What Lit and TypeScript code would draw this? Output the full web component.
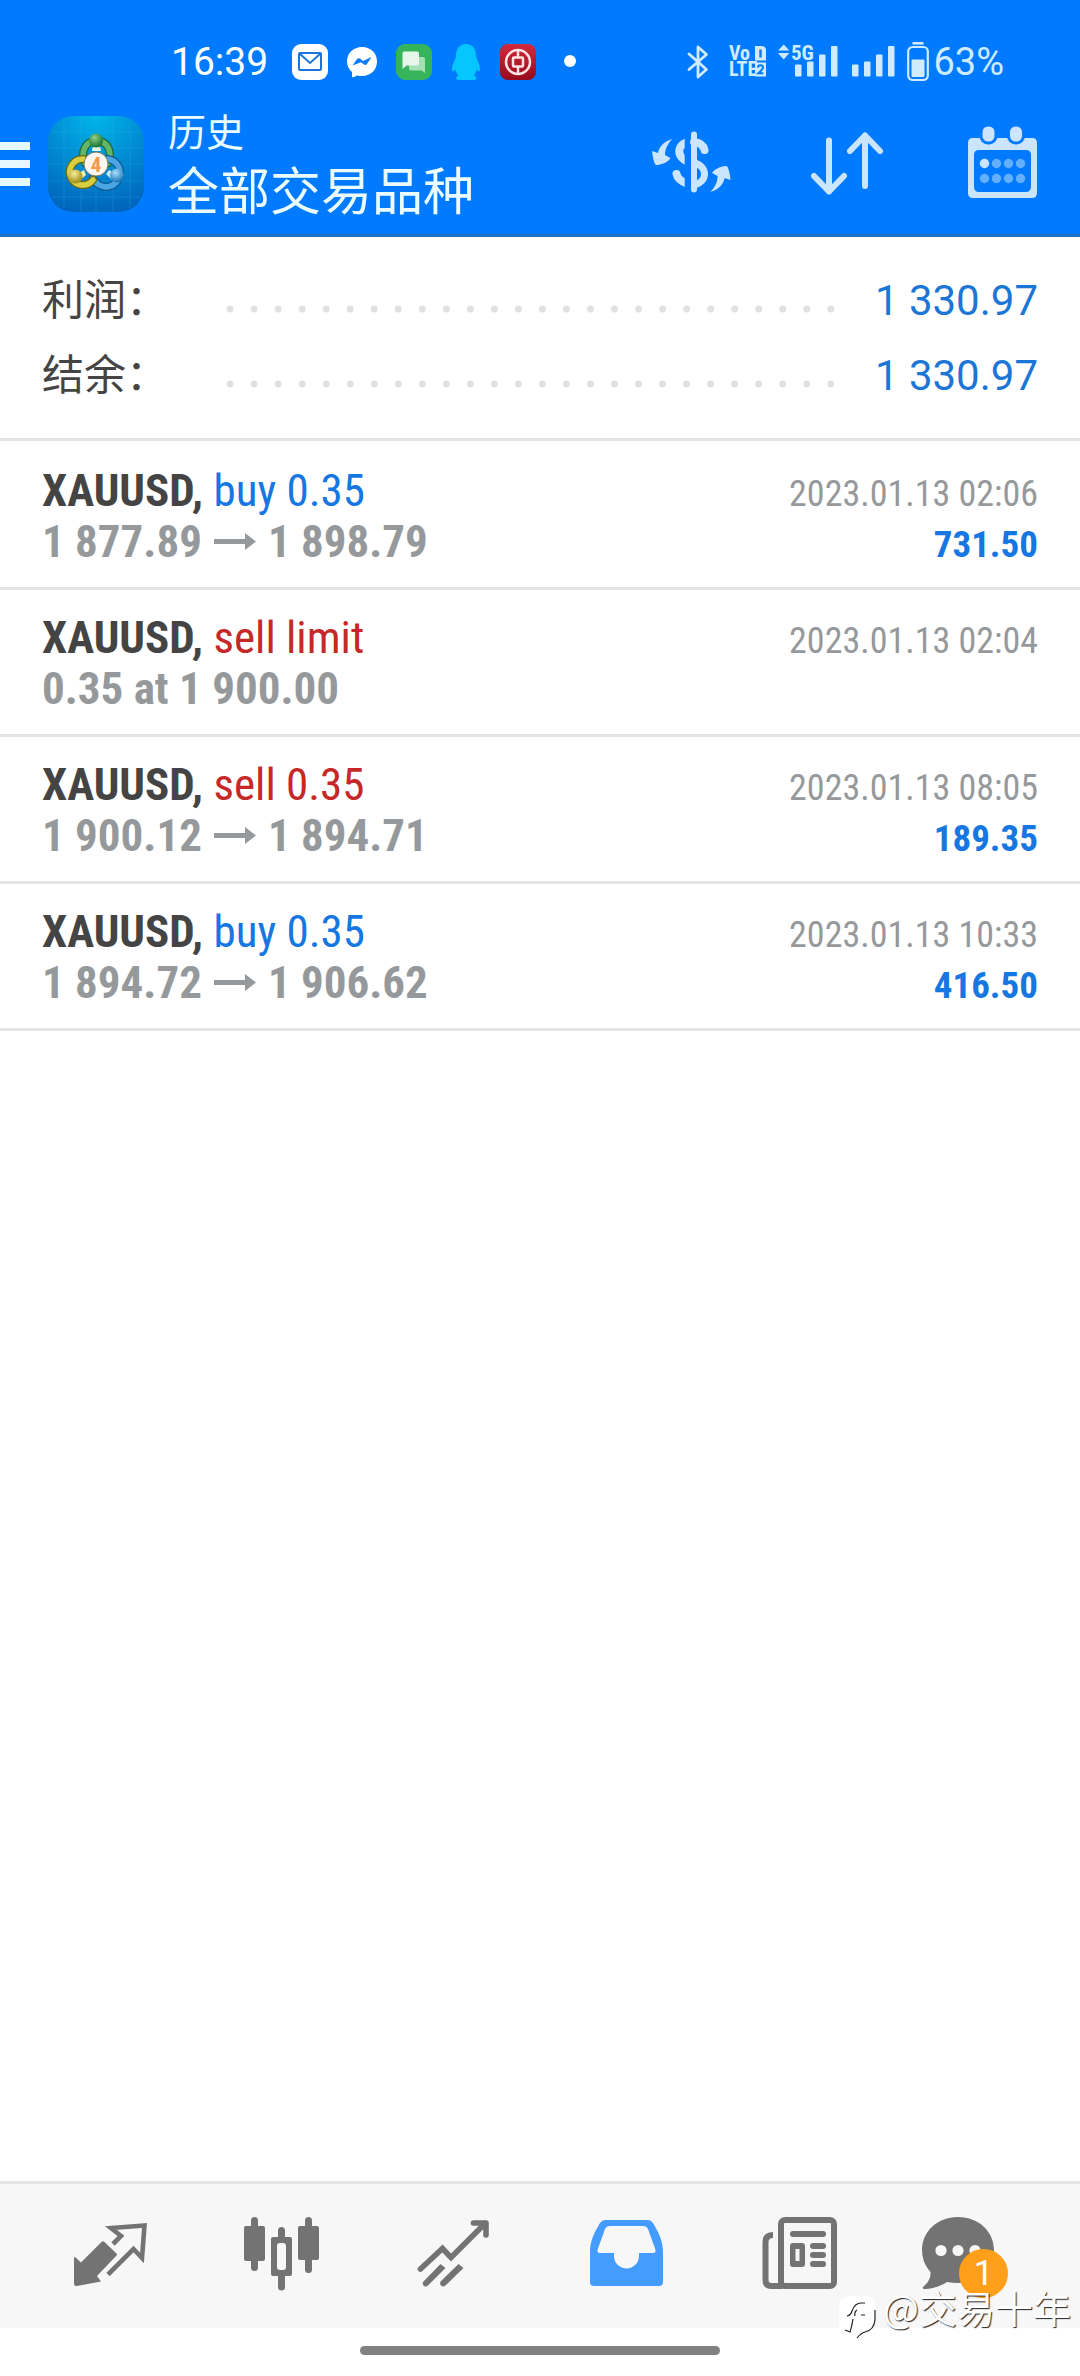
import { LitElement, html, css, svg, nothing, type TemplateResult } from "lit";
import { customElement, property, state } from "lit/decorators.js";
import { classMap } from "lit/directives/class-map.js";

interface Deal {
  symbol: string;
  side: "buy" | "sell";
  action: string;
  from: string;
  to?: string;
  time: string;
  profit?: string;
}

const DEALS: Deal[] = [
  { symbol: "XAUUSD", side: "buy", action: "buy 0.35", from: "1 877.89", to: "1 898.79", time: "2023.01.13 02:06", profit: "731.50" },
  { symbol: "XAUUSD", side: "sell", action: "sell limit", from: "0.35 at 1 900.00", time: "2023.01.13 02:04" },
  { symbol: "XAUUSD", side: "sell", action: "sell 0.35", from: "1 900.12", to: "1 894.71", time: "2023.01.13 08:05", profit: "189.35" },
  { symbol: "XAUUSD", side: "buy", action: "buy 0.35", from: "1 894.72", to: "1 906.62", time: "2023.01.13 10:33", profit: "416.50" },
];

const TOTALS = [
  { label: "利润：", value: "1 330.97" },
  { label: "结余：", value: "1 330.97" },
];

@customElement("status-bar")
export class StatusBar extends LitElement {
  static styles = css`
    :host {
      display: flex;
      align-items: center;
      justify-content: space-between;
      height: 94px;
      padding: 29px 76px 0 171px;
      box-sizing: border-box;
      font-size: 39px;
      line-height: 40px;
      color: #fff;
    }
    svg { display: block; flex: none; overflow: visible; }
    .apps { display: flex; align-items: center; gap: 16px; }
    .time { min-width: 105px; }
    .system { display: flex; align-items: center; color: #cfebff; gap: 12px; }
    .system .level { display: flex; align-items: center; gap: 4px; font-size: 38px; }
    .vo { font: 700 20px "Roboto Condensed", Roboto, sans-serif; }
    .net { font: 700 21px "Roboto Condensed", Roboto, sans-serif; }
  `;

  render() {
    return html`
      <div class="apps">
        <span class="time">16:39</span>
        <svg width="36" height="36" viewBox="0 0 36 36">
          <rect width="36" height="36" rx="9" fill="#fff" />
          <g fill="none" stroke="#1b74dc" stroke-width="2">
            <rect x="7" y="9" width="22" height="17" rx="1" />
            <path d="M8 10 L18 19 L28 10" />
          </g>
        </svg>
        <svg width="36" height="36" viewBox="0 0 36 36">
          <path d="M18 3 C9 3 3 9.400 3 17.500 C3 22 5 25.500 8 28 V32.500 Q8.200 33.600 9.400 33.200 L13 31.500 Q15.500 32 18 32 C27 32 33 25.600 33 17.500 S27 3 18 3Z" fill="#fff" />
          <path d="M8.500 21.500 L13 15 Q14.300 13.500 16 14.600 L19 17 L27.500 13 L23 20 Q21.700 21.700 20 20.500 L17 18.300Z" fill="#0a7cff" />
        </svg>
        <svg width="36" height="36" viewBox="0 0 36 36">
          <rect width="36" height="36" rx="9" fill="#36b45c" />
          <path d="M15 13 H27 Q29 13 29 15 V29 L25.500 26.500 H15 Q13 26.500 13 24.500 V15Z" fill="#a5e0b5" />
          <path d="M8 7.500 H21 Q23 7.500 23 9.500 V19.500 Q23 21.500 21 21.500 H10.500 L6.500 25 V9.500 Q6.500 7.500 8 7.500Z" fill="#e6f7ea" />
        </svg>
        <svg width="36" height="36" viewBox="0 0 36 36">
          <path d="M18 0 C11.500 0 8 5 8 11.500 C8 15 4 20 4 25 Q4 27.500 5 27.500 Q6.300 27 7.300 25.500 Q8.300 29.500 10.500 31.500 Q8 32.500 8 34 Q8 36 13 36 H24 Q28.500 36 28.500 34 Q28.500 32.500 25.700 31.500 Q27.800 29.500 28.800 25.500 Q29.800 27 31 27.500 Q32 27.500 32 25 C32 20 28 15 28 11.500 C28 5 24.500 0 18 0Z" fill="#05c6ff" />
        </svg>
        <svg width="36" height="36" viewBox="0 0 36 36">
          <defs>
            <linearGradient id="bank" x1="0" y1="0" x2="0" y2="1">
              <stop offset="0" stop-color="#d32a3e" />
              <stop offset="1" stop-color="#950a1c" />
            </linearGradient>
          </defs>
          <rect width="36" height="36" rx="8" fill="url(#bank)" />
          <g fill="none" stroke="#ffe3e3" stroke-width="2.500">
            <circle cx="18" cy="18" r="12" />
            <rect x="13" y="13.500" width="10" height="9" rx="1" />
            <path d="M18 6 V13 M18 23 V30" />
          </g>
        </svg>
        <svg width="36" height="36" viewBox="0 0 36 36"><circle cx="18" cy="17" r="6" fill="#fff" /></svg>
      </div>
      <div class="system">
        <svg width="22" height="36" viewBox="0 0 22 36">
          <path d="M2 10 L19.500 25.500 L11 33 V3 L19.500 10.500 L2 25.500" fill="none" stroke="currentColor" stroke-width="2.800" stroke-linejoin="round" stroke-linecap="round" />
        </svg>
        <svg width="44" height="36" viewBox="0 0 44 36">
          <g class="vo" fill="currentColor">
            <text x="8" y="16">Vo</text>
            <text x="8" y="32">LTE</text>
          </g>
          <path d="M34 2 H40 Q45 2 45 6 V16.500 H34Z M34 18.500 H45 V32.500 H34Z" fill="currentColor" />
          <path d="M39.500 5.500 V13.500" stroke="#007aff" stroke-width="2.400" />
          <path d="M37 23.500 Q37 21.300 39.500 21.300 Q42 21.300 42 23.500 Q42 25 37.300 29.300 H42.300" fill="none" stroke="#007aff" stroke-width="2" />
        </svg>
        <svg width="62" height="36" viewBox="0 0 62 36">
          <g fill="currentColor">
            <path d="M1 6.500 L6.700 0.500 L12.400 6.500Z M1 9 L6.700 15.500 L12.400 9Z" />
            <text class="net" x="14" y="16">5G</text>
            <rect x="18" y="20.500" width="6.500" height="12" rx="1" />
            <rect x="30" y="17.500" width="6.500" height="15" rx="1" />
            <rect x="42" y="10.500" width="6.500" height="22" rx="1" />
            <rect x="54" y="2" width="6.500" height="30.500" rx="1" />
          </g>
        </svg>
        <svg width="44" height="36" viewBox="0 0 44 36">
          <g fill="currentColor">
            <rect x="1" y="20.500" width="6.500" height="12" rx="1" />
            <rect x="13" y="17.500" width="6.500" height="15" rx="1" />
            <rect x="25" y="10.500" width="6.500" height="22" rx="1" />
            <rect x="37" y="2" width="6.500" height="30.500" rx="1" />
          </g>
        </svg>
        <span class="level">
          <svg width="22" height="40" viewBox="0 0 22 40">
            <rect x="5.500" y="0" width="11" height="2.600" fill="currentColor" />
            <rect x="1.200" y="5" width="19.600" height="33" rx="4.500" fill="none" stroke="currentColor" stroke-width="2.200" />
            <rect x="4.500" y="17.500" width="13" height="17.500" rx="1" fill="currentColor" />
          </svg>
          63%
        </span>
      </div>
    `;
  }
}

@customElement("history-header")
export class HistoryHeader extends LitElement {
  static styles = css`
    :host {
      display: flex;
      align-items: center;
      height: 143px;
      box-sizing: border-box;
      border-bottom: 3px solid #1d70c4;
      padding-right: 37px;
      color: #fff;
    }
    svg { display: block; }
    button {
      display: block;
      padding: 0;
      border: 0;
      background: none;
      color: #cbe5fe;
      cursor: pointer;
    }
    .brand { margin-left: 18px; flex: none; }
    .titles { flex: 1; min-width: 0; margin-left: 24px; padding-top: 6px; }
    h1, p { margin: 0; font-weight: 400; color: #eafcff; }
    h1 { font-size: 38px; line-height: 52px; }
    p { font-size: 51px; line-height: 68px; }
    .actions { display: flex; gap: 76px; }
    .four { font: 700 21px "Roboto Condensed", Roboto, sans-serif; }
  `;

  render() {
    return html`
      <button aria-label="菜单">
        <svg width="30" height="44" viewBox="0 0 30 44">
          <path d="M0 4 H30 M0 22 H30 M0 40 H30" stroke="#e4faff" stroke-width="8" />
        </svg>
      </button>
      <svg class="brand" width="96" height="96" viewBox="0 0 96 96">
        <defs>
          <radialGradient id="sky" cx="0.5" cy="0" r="1.050">
            <stop offset="0" stop-color="#00b6ea" />
            <stop offset="0.5" stop-color="#008bd2" />
            <stop offset="1" stop-color="#0062bb" />
          </radialGradient>
          <radialGradient id="g" cx="0.4" cy="0.3" r="0.7"><stop offset="0" stop-color="#8fd08a" /><stop offset="1" stop-color="#17702a" /></radialGradient>
          <radialGradient id="y" cx="0.4" cy="0.3" r="0.7"><stop offset="0" stop-color="#f6ee9a" /><stop offset="1" stop-color="#9c8a10" /></radialGradient>
          <radialGradient id="b" cx="0.4" cy="0.3" r="0.7"><stop offset="0" stop-color="#a8e0fb" /><stop offset="1" stop-color="#1672b8" /></radialGradient>
        </defs>
        <rect width="96" height="96" rx="25" fill="url(#sky)" />
        <path d="M16 4 V92 M33 1 V95 M48 0 V96 M65 1 V95 M82 4 V92 M4 16 H92 M1 32 H95 M0 48 H96 M1 65 H95 M4 81 H92" stroke="#39b2e6" stroke-width="1" opacity="0.250" />
        <g stroke-linecap="round" fill="none">
          <path d="M37 47 A13.500 15 0 1 1 60 47" stroke="#1c6b35" stroke-width="8" />
          <path d="M37 47 A13.500 15 0 1 1 60 47" stroke="#62b667" stroke-width="5.500" />
          <path d="M60 43 A14 14 0 1 1 45 62" stroke="#125a93" stroke-width="8" />
          <path d="M60 43 A14 14 0 1 1 45 62" stroke="#4aa5e2" stroke-width="5.500" />
          <path d="M45 64 A13 13 0 1 1 35 43" stroke="#6e6a12" stroke-width="8" />
          <path d="M45 64 A13 13 0 1 1 35 43" stroke="#d8cf40" stroke-width="5.500" />
        </g>
        <path d="M44 35 Q44 30 48 30 Q53 30 53 35Z" fill="#e9f6e6" />
        <path d="M30 66 Q27 58 36 54 L38 59Z" fill="#f3efb4" />
        <path d="M66 66 Q70 58 61 54 L58 58Z" fill="#c5e8fb" />
        <circle cx="48" cy="24.500" r="7" fill="url(#g)" />
        <circle cx="27.500" cy="60.500" r="7" fill="url(#y)" />
        <circle cx="69" cy="59.500" r="7" fill="url(#b)" />
        <circle cx="48" cy="48" r="12" fill="#fbf6f2" stroke="#7d7a60" stroke-width="1" />
        <text class="four" x="48" y="55.500" text-anchor="middle" fill="#f3994a">4</text>
      </svg>
      <div class="titles">
        <h1>历史</h1>
        <p>全部交易品种</p>
      </div>
      <div class="actions">
        <button aria-label="品种">
          <svg width="80" height="80" viewBox="0 0 80 80">
            <defs><clipPath id="left"><rect x="0" y="0" width="33.700" height="80" /></clipPath></defs>
            <g fill="none" stroke="currentColor" stroke-width="8">
              <g clip-path="url(#left)">
                <path d="M38 18 C25 20 25 34 38 38" />
                <path d="M25.500 50 Q27 57 38 60" stroke-linecap="round" />
              </g>
              <path d="M43 10.500 V65.500" stroke-width="6" stroke-linecap="round" />
              <path d="M43 18 Q52 19 53.500 26" stroke-linecap="round" />
              <path d="M43 39 C57 42 57 58 43 61" stroke-width="7" />
            </g>
            <g fill="currentColor">
              <path id="swing" d="M21.500 15 C13 17 8 23 7 29 L1 27 Q2 36 4 40 Q5 41.500 7 41 C12 40 17 38 19.500 34 L14 31 C14 25 17 19 21.500 15Z" />
              <use href="#swing" transform="rotate(180 40.300 41.500)" />
            </g>
          </svg>
        </button>
        <button aria-label="排序">
          <svg width="80" height="80" viewBox="0 0 80 80">
            <path d="M22 16.500 V67.500 M7 52 L22 67.500 L37 52 M58 62 V11.500 M43 27 L58 11.500 L73 27" fill="none" stroke="currentColor" stroke-width="6" stroke-linecap="round" stroke-linejoin="round" />
          </svg>
        </button>
        <button aria-label="日期">
          <svg width="80" height="80" viewBox="0 0 80 80">
            <path fill-rule="evenodd" fill="currentColor" d="M10 14 H69 Q74 14 74 19 V69 Q74 74 69 74 H10 Q5 74 5 69 V19 Q5 14 10 14Z M16 26 Q11 26 11 31 V62 Q11 68 16 68 H63 Q68 68 68 62 V31 Q68 26 63 26Z" />
            <g fill="currentColor" stroke="#007aff" stroke-width="3">
              <rect x="18" y="1" width="15" height="18" rx="7" />
              <rect x="45.500" y="1" width="15" height="18" rx="7" />
            </g>
            ${[39.5, 54.5].map((y) =>
              [21.5, 33.5, 45.5, 57.5].map((x, i) => svg`<circle cx=${x} cy=${y} r="4.700" fill=${i === 0 && y < 50 ? "#cbe5fe" : "#62b0ff"} />`),
            )}
          </svg>
        </button>
      </div>
    `;
  }
}

@customElement("totals-panel")
export class TotalsPanel extends LitElement {
  static styles = css`
    :host {
      display: block;
      padding: 26px 42px 25px;
      border-bottom: 3px solid #e3e3e3;
    }
    dl { margin: 0; }
    .line { display: flex; align-items: center; height: 75px; font-size: 42px; line-height: 50px; }
    dt { min-width: 176px; color: #444; }
    .leader {
      flex: 1;
      height: 24px;
      margin-right: 32px;
      background: radial-gradient(circle, #e0e0e0 3px, transparent 4px) 0 100% / 24px 8px round no-repeat;
    }
    dd { margin: 0; color: #1b76d6; }
  `;

  render() {
    return html`<dl>
      ${TOTALS.map((t) => html`<div class="line"><dt>${t.label}</dt><span class="leader"></span><dd>${t.value}</dd></div>`)}
    </dl>`;
  }
}

@customElement("deal-row")
export class DealRow extends LitElement {
  @property({ attribute: false }) deal!: Deal;

  static styles = css`
    :host {
      display: block;
      padding: 22px 42px 20px;
      border-bottom: 3px solid #e3e3e3;
      font-family: "Roboto Condensed", Roboto, sans-serif;
      font-size: 45px;
      line-height: 51px;
      color: #96999b;
    }
    .line { display: flex; align-items: baseline; justify-content: space-between; height: 51px; }
    .symbol { font-weight: 700; color: #444; }
    .buy { color: #1677e2; }
    .sell { color: #c62828; }
    .prices { display: flex; align-items: baseline; gap: 12px; font-weight: 700; }
    .time { font-size: 36px; }
    .profit { font-size: 37px; font-weight: 700; color: #1677e2; }
  `;

  render() {
    const d = this.deal;
    return html`
      <div class="line">
        <span><span class="symbol">${d.symbol},</span> <span class=${d.side}>${d.action}</span></span>
        <time class="time">${d.time}</time>
      </div>
      <div class="line">
        <span class="prices">
          <span>${d.from}</span>
          ${d.to
            ? html`<svg width="42" height="24" viewBox="0 0 42 24"><path d="M0 6 H31 V0 L42 8.500 L31 17 V11 H0Z" fill="currentColor" /></svg><span>${d.to}</span>`
            : nothing}
        </span>
        ${d.profit ? html`<span class="profit">${d.profit}</span>` : nothing}
      </div>
    `;
  }
}

interface Tab {
  id: string;
  label: string;
  icon: TemplateResult;
  badge?: number;
}

const TABS: Tab[] = [
  {
    id: "quotes",
    label: "行情",
    icon: svg`
      <path d="M7 43.500 L8 43 L14 48.500 L34.500 28 Q36 26.500 37.500 28 L49.500 39.500 Q50.500 40.500 49.500 41.500 L30 62 L34 67.500 L10 72 Q7 72.500 7 69.500Z" fill="currentColor" />
      <path d="M46 30 L54 22 L44 14 L77.500 11.500 L75 44 L66.500 35 L41 60.500" fill="none" stroke="currentColor" stroke-width="4.600" />`,
  },
  {
    id: "chart",
    label: "图表",
    icon: svg`
      <g fill="currentColor">
        <rect x="12" y="3" width="7" height="54" rx="3.500" /><rect x="5" y="12" width="21" height="35" rx="2" />
        <rect x="66" y="3" width="7" height="56" rx="3.500" /><rect x="59" y="12" width="21" height="34" rx="2" />
        <path fill-rule="evenodd" d="M39 23 V16.500 A3.500 3.500 0 0 1 46 16.500 V23 H51 Q53 23 53 25 V60 Q53 62 51 62 H46 V73 A3.500 3.500 0 0 1 39 73 V62 H34 Q32 62 32 60 V25 Q32 23 34 23Z M38 32 V53 Q38 56 41 56 H44 Q47 56 47 53 V32 Q47 29 44 29 H41 Q38 29 38 32Z" />
      </g>`,
  },
  {
    id: "trade",
    label: "交易",
    icon: svg`
      <g fill="none" stroke="currentColor" stroke-width="5.600" stroke-linecap="round">
        <path d="M9.500 55 L31.500 34.500 L40 43.500 L74 9.500" stroke-linejoin="miter" />
        <path d="M62.500 9 H75 V21" stroke-linejoin="round" />
      </g>
      <path d="M12 68 L29.500 50 L34.500 54 L17 71.500 Q14.500 73.500 12.500 71.500 Q11 70 12 68Z M29.500 67.500 L47.500 50 L52.500 54 L34.500 71.500 Q32 73.500 30 71.500 Q28.500 69.500 29.500 67.500Z" fill="currentColor" />`,
  },
  {
    id: "history",
    label: "历史",
    icon: svg`
      <path fill-rule="evenodd" fill="currentColor" d="M22 6 H65 Q68 6 70 9 C76 19 80 27 80 38 V68 Q80 72 76 72 H11 Q7 72 7 68 V38 C7 27 11 19 17 9 Q19 6 22 6Z M27 12 Q23.500 12 22 15 L14.800 35 Q13.500 39 17 39 H31 V42 A12.500 12.500 0 0 0 56 42 V39 H70 Q73.500 39 72.200 35 L65 15 Q63.500 12 60 12Z" />`,
  },
  {
    id: "news",
    label: "新闻",
    icon: svg`
      <g fill="none" stroke="currentColor" stroke-width="6">
        <rect x="26" y="6" width="53" height="66" rx="4" />
        <path d="M18 21 Q10.500 21 10.500 28 V66 Q10.500 72 16.500 72 H28" />
      </g>
      <g fill="currentColor">
        <rect x="35" y="17" width="36" height="6" rx="3" />
        <path fill-rule="evenodd" d="M38 29 H47 Q50 29 50 32 V50 Q50 53 47 53 H38 Q35 53 35 50 V32 Q35 29 38 29Z M40.500 35 V47 H44.500 V35Z" />
        <rect x="55" y="29" width="16" height="6" rx="3" />
        <rect x="55" y="38" width="16" height="6" rx="3" />
        <rect x="55" y="47" width="16" height="6" rx="3" />
      </g>`,
  },
  {
    id: "chat",
    label: "消息",
    badge: 1,
    icon: svg`
      <path d="M31 3 C10 3 -5 18 -5 36 Q-5 49 3.500 58 C4 64 1 69 -4 73 Q-5 75.500 -2 75 C7 74.500 14 72 20 68 Q25 69 31 69 C52 69 67 54 67 36 S52 3 31 3Z" fill="currentColor" />
      <g fill="#f7f7f7"><circle cx="14" cy="36.500" r="5.600" /><circle cx="31" cy="36.500" r="5.600" /><circle cx="48" cy="36.500" r="5.600" /></g>`,
  },
];

@customElement("tab-bar")
export class TabBar extends LitElement {
  @state() private current = "history";

  static styles = css`
    :host { display: block; position: relative; background: #fff; }
    nav {
      display: grid;
      grid-template-columns: repeat(6, 1fr);
      padding: 0 24px;
      border-top: 3px solid #e3e3e3;
      background: #f7f7f7;
    }
    .tab {
      display: flex;
      justify-content: center;
      padding: 30px 0 36px;
      border: 0;
      background: none;
      color: #737373;
      cursor: pointer;
    }
    .active { color: #459cff; }
    .icon { position: relative; display: block; }
    svg { display: block; overflow: visible; }
    .badge {
      position: absolute;
      right: 5px;
      bottom: -6px;
      width: 49px;
      height: 49px;
      border-radius: 50%;
      background: #ff9f1a;
      color: #fff;
      font: 35px/49px Roboto, sans-serif;
      text-align: center;
    }
    .gesture { display: flex; justify-content: center; padding: 18px 0 21px; }
    .pill { width: 33.333%; height: 9px; border-radius: 5px; background: #808080; }
    .signature {
      position: absolute;
      right: 9px;
      bottom: 36px;
      display: flex;
      align-items: flex-end;
      gap: 6px;
      color: #fff;
      font-size: 38px;
      line-height: 50px;
      font-family: "Noto Sans CJK SC", sans-serif;
      text-shadow: 1px 1px 1px #222;
      pointer-events: none;
    }
    .author { padding-bottom: 8px; }
  `;

  render() {
    return html`
      <nav>
        ${TABS.map(
          (t) => html`<button class=${classMap({ tab: true, active: t.id === this.current })} aria-label=${t.label} @click=${() => (this.current = t.id)}>
            <span class="icon">
              <svg width="86" height="78" viewBox="0 0 86 78">${t.icon}</svg>
              ${t.badge ? html`<span class="badge">${t.badge}</span>` : nothing}
            </span>
          </button>`,
        )}
      </nav>
      <div class="gesture"><span class="pill"></span></div>
      <div class="signature">
        <svg width="38" height="44" viewBox="0 0 38 44">
          <path d="M12 0 H26 Q37 1 37 12 V22 Q36 34 25 37 Q22 38 18 42 Q18 39 16 38 H12 Q0 37 0 25 V12 Q1 1 12 0Z" fill="#fff" />
          <path d="M8 20 Q12 19 13 15 Q16 7 22 7 H26 M16 20 Q15 16 18 14 M22 19 H26 M14 23 Q13 30 11 36 L6 34 M36 14 V24 Q35 34 26 36 Q22 37 18 42" fill="none" stroke="#222" stroke-width="1.200" />
        </svg>
        <span class="author">@交易十年</span>
      </div>
    `;
  }
}

@customElement("app-root")
export class AppRoot extends LitElement {
  static styles = css`
    :host {
      display: flex;
      flex-direction: column;
      min-height: 100vh;
      background: #fff;
      font-family: Roboto, "Noto Sans CJK SC", sans-serif;
    }
    header { background: #007aff; }
    main { flex: 1; }
    .deals { padding-top: 2px; }
  `;

  render() {
    return html`
      <header>
        <status-bar></status-bar>
        <history-header></history-header>
      </header>
      <main>
        <totals-panel></totals-panel>
        <div class="deals">${DEALS.map((d) => html`<deal-row .deal=${d}></deal-row>`)}</div>
      </main>
      <tab-bar></tab-bar>
    `;
  }
}
